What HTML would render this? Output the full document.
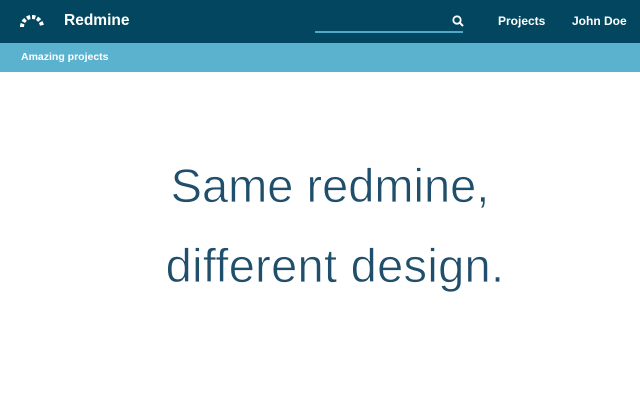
<!DOCTYPE html>
<html><head><meta charset="utf-8"><style>
body{margin:0;width:640px;height:400px;background:#fff;font-family:"Liberation Sans",sans-serif;overflow:hidden;position:relative}
.top{position:absolute;left:0;top:0;width:640px;height:43px;background:#02475f}
.sub{position:absolute;left:0;top:43px;width:640px;height:29px;background:#5ab2cf}
.t{position:absolute;color:#fff;font-weight:bold}
.big{position:absolute;left:0;width:640px;text-align:center;color:#1f4f6a;font-size:47px;-webkit-text-stroke:0.7px #fff}
</style></head><body>
<div class="top"></div>
<svg style="position:absolute;left:19px;top:10px" width="26" height="19" viewBox="0 0 26 19">
<g stroke="#fff" stroke-width="4" fill="none" stroke-dasharray="3.4 1.8">
<path d="M3 17 A10 10 0 0 1 23 17"/></g></svg>
<div class="t" style="left:64px;top:12px;font-size:15.5px">Redmine</div>
<div style="position:absolute;left:315px;top:31px;width:148px;height:2px;background:#4fa9c9"></div>
<svg style="position:absolute;left:452px;top:15px" width="12" height="12" viewBox="0 0 12 12"><circle cx="5" cy="5" r="3.7" stroke="#fff" stroke-width="1.8" fill="none"/><path d="M7.7 7.7L11 11" stroke="#fff" stroke-width="2"/></svg>
<div class="t" style="left:498px;top:14px;font-size:12px">Projects</div>
<div class="t" style="left:572px;top:14px;font-size:12px">John Doe</div>
<div class="sub"></div>
<div class="t" style="left:21px;top:51px;font-size:10.5px">Amazing projects</div>
<div class="big" style="top:158px;padding-left:10px">Same redmine,</div>
<div class="big" style="top:238px;padding-left:15px;letter-spacing:0.3px">different design.</div>
</body></html>
